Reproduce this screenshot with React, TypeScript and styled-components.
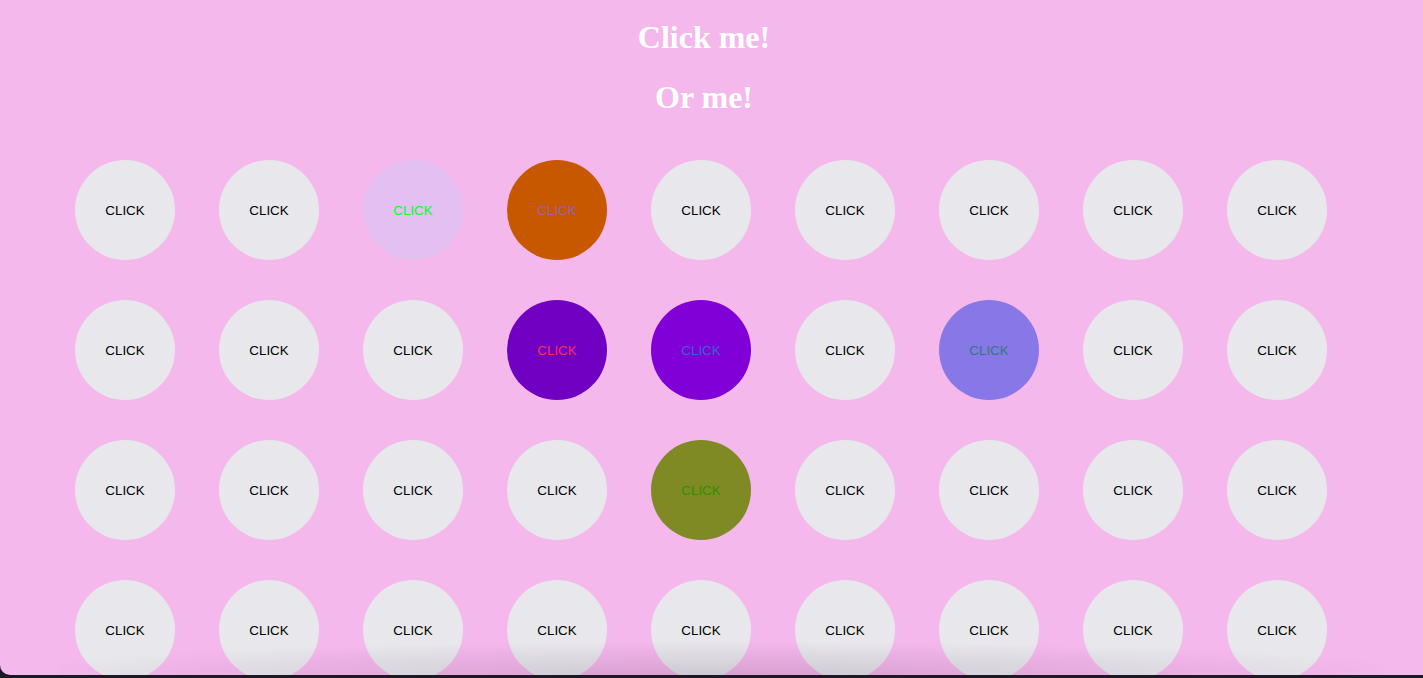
import React from "react";
import styled, { createGlobalStyle } from "styled-components";

const GlobalStyle = createGlobalStyle`
  html, body { margin: 0; padding: 0; background: #1d1924; }
  #root { width: 1423px; }
`;

const Page = styled.div`
  position: relative;
  height: 675px;
  overflow: hidden;
  background: #f5b8ec;
  border-bottom-left-radius: 10px;
  padding: 18.5px 23px 0 8px;
  box-sizing: border-box;
  display: flex;
  flex-direction: column;
`;

const Title = styled.h1`
  margin: 0 0 23.44px;
  font-family: "Liberation Serif", "Times New Roman", serif;
  font-size: 32px;
  font-weight: 700;
  line-height: 37px;
  color: #ffffff;
  text-align: center;
`;

const Grid = styled.div`
  display: grid;
  grid-template-columns: repeat(9, 100px);
  column-gap: 44px;
  row-gap: 40px;
  margin-top: 21px;
  padding-left: 67px;
`;

const Circle = styled.button<{ $bg: string; $fg: string }>`
  width: 100px;
  height: 100px;
  border: none;
  border-radius: 50%;
  padding: 0;
  background: ${(p) => p.$bg};
  color: ${(p) => p.$fg};
  font-family: "Liberation Sans", Arial, sans-serif;
  font-size: 13.33px;
  display: flex;
  align-items: center;
  justify-content: center;
  cursor: pointer;
`;

const BottomShade = styled.div`
  position: absolute;
  left: 60px;
  right: 40px;
  bottom: 0;
  height: 34px;
  pointer-events: none;
  background: radial-gradient(
    ellipse 55% 100% at 50% 100%,
    rgba(60, 40, 70, 0.16),
    rgba(60, 40, 70, 0) 100%
  );
`;

const DEFAULT = { bg: "#e8e7ec", fg: "#000000" };

const special: Record<number, { bg: string; fg: string }> = {
  2: { bg: "#e3c0f1", fg: "#00ff22" },
  3: { bg: "#c85800", fg: "#9a62b0" },
  12: { bg: "#7000c2", fg: "#ff2a5a" },
  13: { bg: "#8000d7", fg: "#3a66cc" },
  15: { bg: "#8877e6", fg: "#2e7c76" },
  22: { bg: "#7f8a25", fg: "#2a9200" },
};

export default function App() {
  const cells = Array.from({ length: 36 }, (_, i) => special[i] ?? DEFAULT);
  return (
    <>
      <GlobalStyle />
      <Page>
        <Title>Click me!</Title>
        <Title>Or me!</Title>
        <Grid>
          {cells.map((c, i) => (
            <Circle key={i} $bg={c.bg} $fg={c.fg}>
              CLICK
            </Circle>
          ))}
        </Grid>
        <BottomShade />
      </Page>
    </>
  );
}
